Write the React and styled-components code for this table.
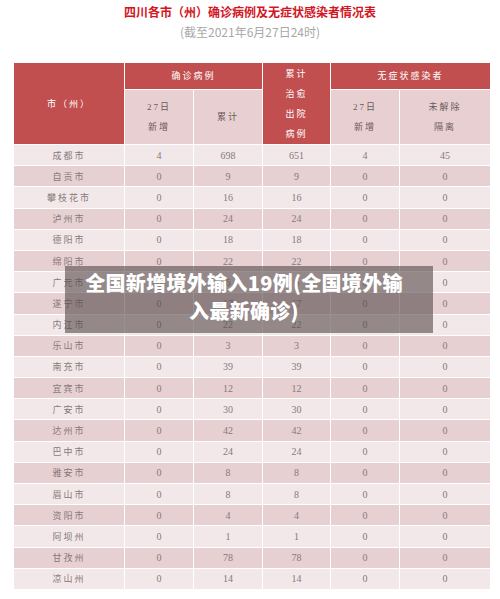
import React from "react";
import styled, { createGlobalStyle } from "styled-components";

const GlobalStyle = createGlobalStyle`
  html, body {
    margin: 0;
    padding: 0;
    background: #ffffff;
  }
  body {
    font-family: "Noto Sans CJK SC", "Noto Sans", sans-serif;
  }
`;

const rows = [
  ["成都市", 4, 698, 651, 4, 45],
  ["自贡市", 0, 9, 9, 0, 0],
  ["攀枝花市", 0, 16, 16, 0, 0],
  ["泸州市", 0, 24, 24, 0, 0],
  ["德阳市", 0, 18, 18, 0, 0],
  ["绵阳市", 0, 22, 22, 0, 0],
  ["广元市", 0, 6, 6, 0, 0],
  ["遂宁市", 0, 17, 17, 0, 0],
  ["内江市", 0, 22, 22, 0, 0],
  ["乐山市", 0, 3, 3, 0, 0],
  ["南充市", 0, 39, 39, 0, 0],
  ["宜宾市", 0, 12, 12, 0, 0],
  ["广安市", 0, 30, 30, 0, 0],
  ["达州市", 0, 42, 42, 0, 0],
  ["巴中市", 0, 24, 24, 0, 0],
  ["雅安市", 0, 8, 8, 0, 0],
  ["眉山市", 0, 8, 8, 0, 0],
  ["资阳市", 0, 4, 4, 0, 0],
  ["阿坝州", 0, 1, 1, 0, 0],
  ["甘孜州", 0, 78, 78, 0, 0],
  ["凉山州", 0, 14, 14, 0, 0],
];

const Page = styled.div`
  position: relative;
  width: 500px;
  height: 599px;
  overflow: hidden;
`;

const Title = styled.h1`
  margin: 0;
  padding-top: 4px;
  text-align: center;
  font-size: 12px;
  line-height: 16px;
  font-weight: 700;
  color: #d3161f;
`;

const Subtitle = styled.div`
  margin-top: 5px;
  text-align: center;
  font-size: 12px;
  line-height: 14px;
  color: #a8a8a8;
`;

const Table = styled.table`
  margin: 23px 0 0 13px;
  width: 477px;
  border-collapse: collapse;
  table-layout: fixed;
  font-family: "Liberation Serif", "Noto Sans CJK SC", serif;
`;

const Th = styled.th`
  border: 1px solid #ffffff;
  padding: 0;
  font-weight: 400;
  font-size: 9px;
  letter-spacing: 2px;
  text-align: center;
  vertical-align: middle;
  background: ${(p) => (p.$light ? "#e8d0d2" : "#c24f4f")};
  color: ${(p) => (p.$light ? "#6a5a5a" : "#ffffff")};
  line-height: ${(p) => p.$lh || 14}px;
  height: ${(p) => p.$h}px;
`;

const Row = styled.tr`
  height: 21.2px;
  background: ${(p) => (p.$dark ? "#e7d0d2" : "#f3e8e9")};
`;

const Td = styled.td`
  border: 1px solid #ffffff;
  padding: 0;
  text-align: center;
  vertical-align: middle;
  font-size: ${(p) => (p.$name ? "9px" : "10px")};
  letter-spacing: ${(p) => (p.$name ? "2px" : "0")};
  color: #857a7a;
`;

const Overlay = styled.div`
  position: absolute;
  left: 65px;
  top: 266px;
  width: 368px;
  height: 67px;
  padding: 0 10px 6px 0;
  box-sizing: border-box;
  background: rgba(88, 78, 78, 0.62);
  display: flex;
  flex-direction: column;
  align-items: center;
  justify-content: center;
  color: #ffffff;
  font-size: 20px;
  font-weight: 900;
  line-height: 28px;
  letter-spacing: 0.3px;
  white-space: nowrap;
`;

export default function App() {
  return (
    <Page>
      <GlobalStyle />
      <Title>四川各市（州）确诊病例及无症状感染者情况表</Title>
      <Subtitle>(截至2021年6月27日24时)</Subtitle>
      <Table>
        <colgroup>
          <col style={{ width: 111 }} />
          <col style={{ width: 69 }} />
          <col style={{ width: 69 }} />
          <col style={{ width: 68 }} />
          <col style={{ width: 69 }} />
          <col style={{ width: 91 }} />
        </colgroup>
        <thead>
          <tr>
            <Th rowSpan={2} $h={26}>市（州）</Th>
            <Th colSpan={2} $h={26}>确诊病例</Th>
            <Th rowSpan={2} $lh={20}>
              累计<br />治愈<br />出院<br />病例
            </Th>
            <Th colSpan={2} $h={26}>无症状感染者</Th>
          </tr>
          <tr>
            <Th $light $h={54} $lh={20}>27日<br />新增</Th>
            <Th $light $h={54}>累计</Th>
            <Th $light $h={54} $lh={20}>27日<br />新增</Th>
            <Th $light $h={54} $lh={20}>未解除<br />隔离</Th>
          </tr>
        </thead>
        <tbody>
          {rows.map((r, i) => (
            <Row key={r[0]} $dark={i % 2 === 1}>
              <Td $name>{r[0]}</Td>
              {r.slice(1).map((v, j) => (
                <Td key={j}>{v}</Td>
              ))}
            </Row>
          ))}
        </tbody>
      </Table>
      <Overlay>
        <span>全国新增境外输入19例(全国境外输</span>
        <span>入最新确诊)</span>
      </Overlay>
    </Page>
  );
}
